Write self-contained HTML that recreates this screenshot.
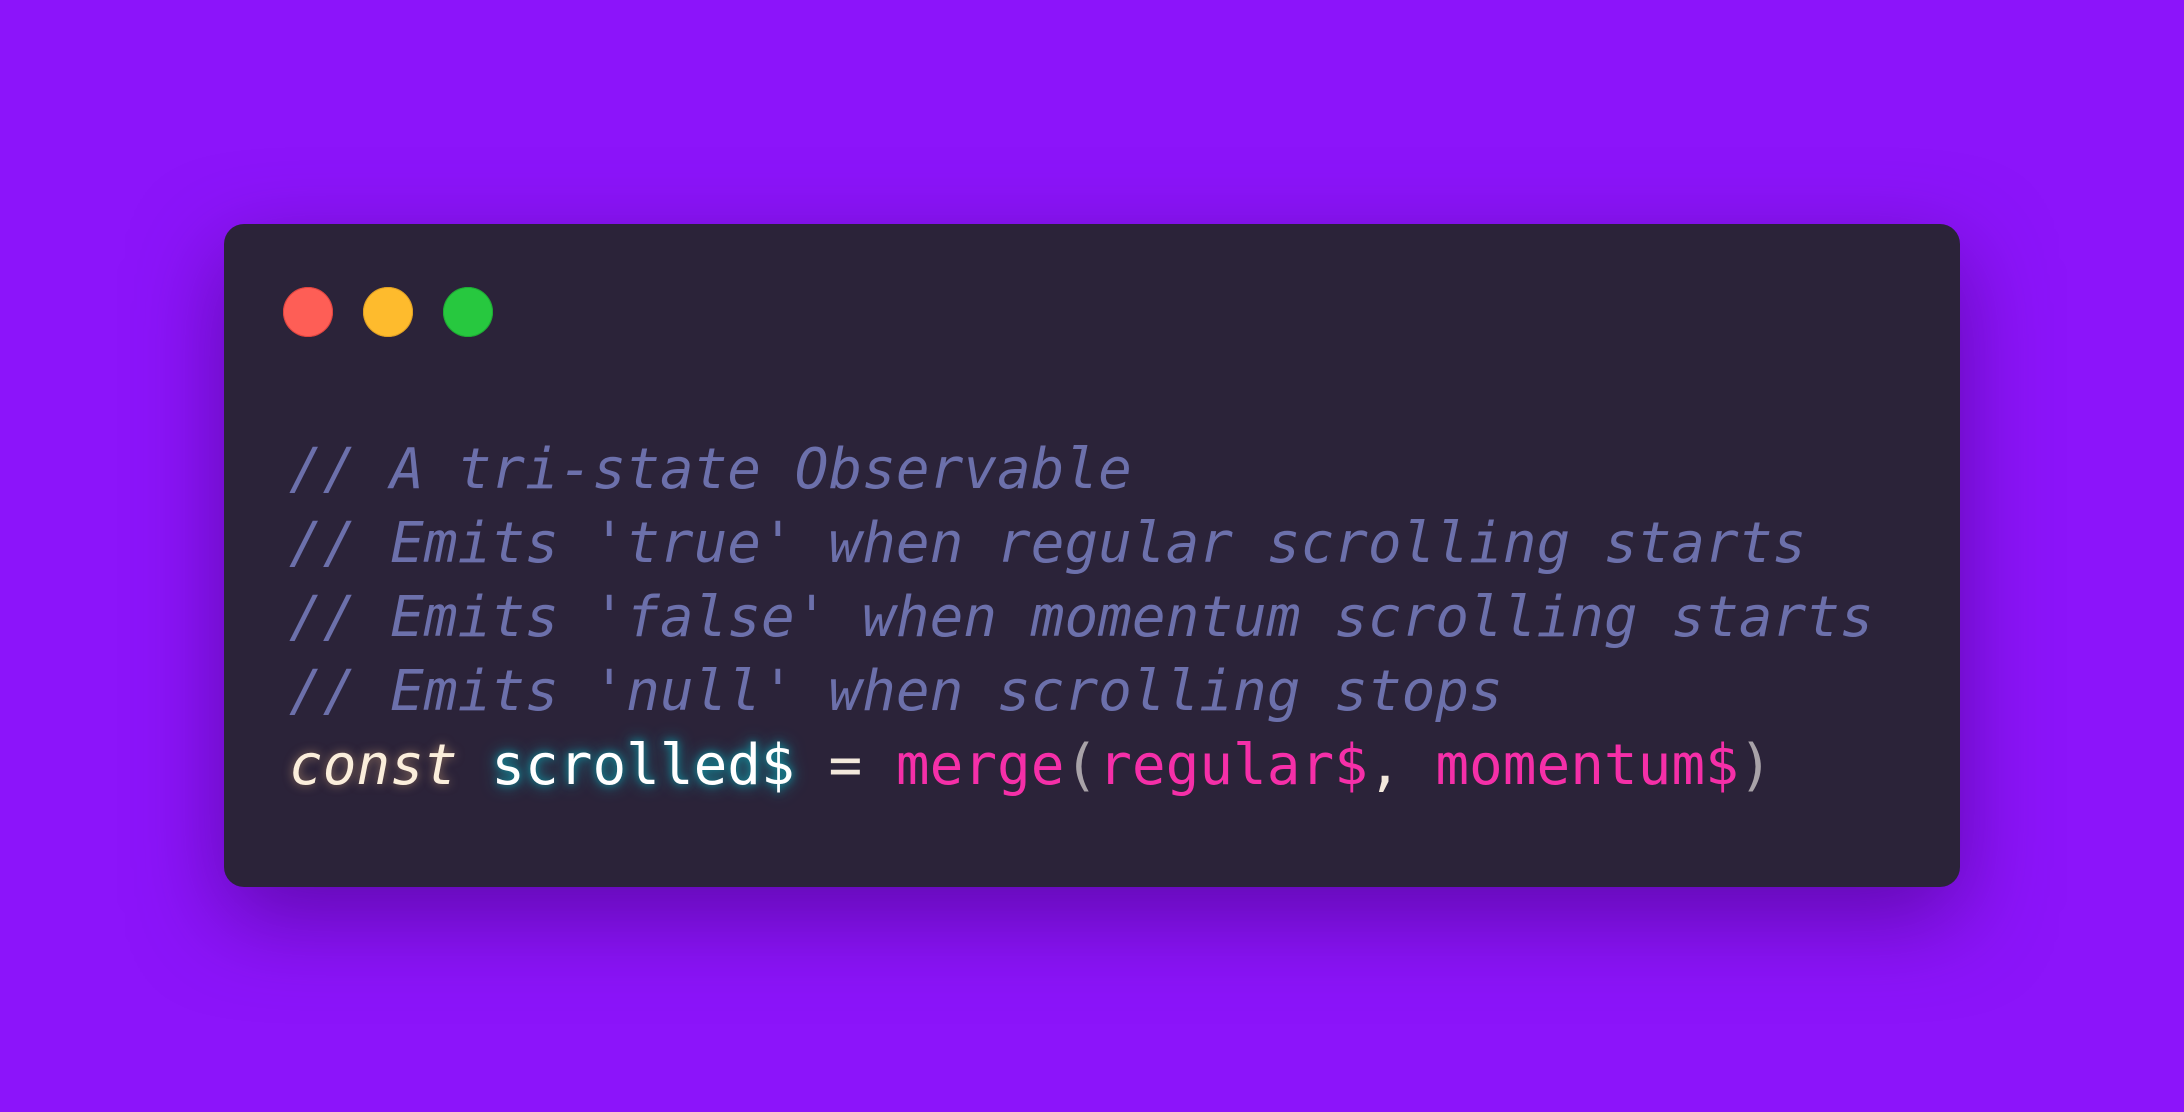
<!DOCTYPE html>
<html><head><meta charset="utf-8"><style>
html,body{margin:0;padding:0}
body{width:2184px;height:1112px;background:#8c14fa;position:relative;overflow:hidden}
.card{position:absolute;left:224px;top:224px;width:1736px;height:663px;background:#2b2339;border-radius:20px;box-shadow:0 30px 90px rgba(60,0,110,0.55)}
.dot{position:absolute;top:287px;width:50px;height:50px;border-radius:50%}
pre{position:absolute;left:289px;top:433px;margin:0;font-family:"DejaVu Sans Mono","Liberation Mono",monospace;font-size:56px;line-height:74px;color:#6c70ab}
.c{font-style:italic;color:#6c70ab}
.k{font-style:italic;color:#fbeedb;text-shadow:0 0 10px rgba(255,200,140,0.5)}
.v{color:#fff;text-shadow:0 0 16px #139fae,0 0 8px #127f8c}
.p{color:#f52fa8}
.w{color:#f3e8dc}
.g{color:#a8a2a8}
</style></head><body>
<div class="card"></div>
<div class="dot" style="left:283px;background:#fe5e56;box-shadow:inset 0 0 0 1px #e0443f"></div>
<div class="dot" style="left:363px;background:#febb2d;box-shadow:inset 0 0 0 1px #e0a024"></div>
<div class="dot" style="left:443px;background:#27c83f;box-shadow:inset 0 0 0 1px #1eab34"></div>
<pre><span class="c">// A tri-state Observable
// Emits 'true' when regular scrolling starts
// Emits 'false' when momentum scrolling starts
// Emits 'null' when scrolling stops</span>
<span class="k">const</span> <span class="v">scrolled$</span> <span class="w">=</span> <span class="p">merge</span><span class="g">(</span><span class="p">regular$</span><span class="w">,</span> <span class="p">momentum$</span><span class="g">)</span></pre>
</body></html>
